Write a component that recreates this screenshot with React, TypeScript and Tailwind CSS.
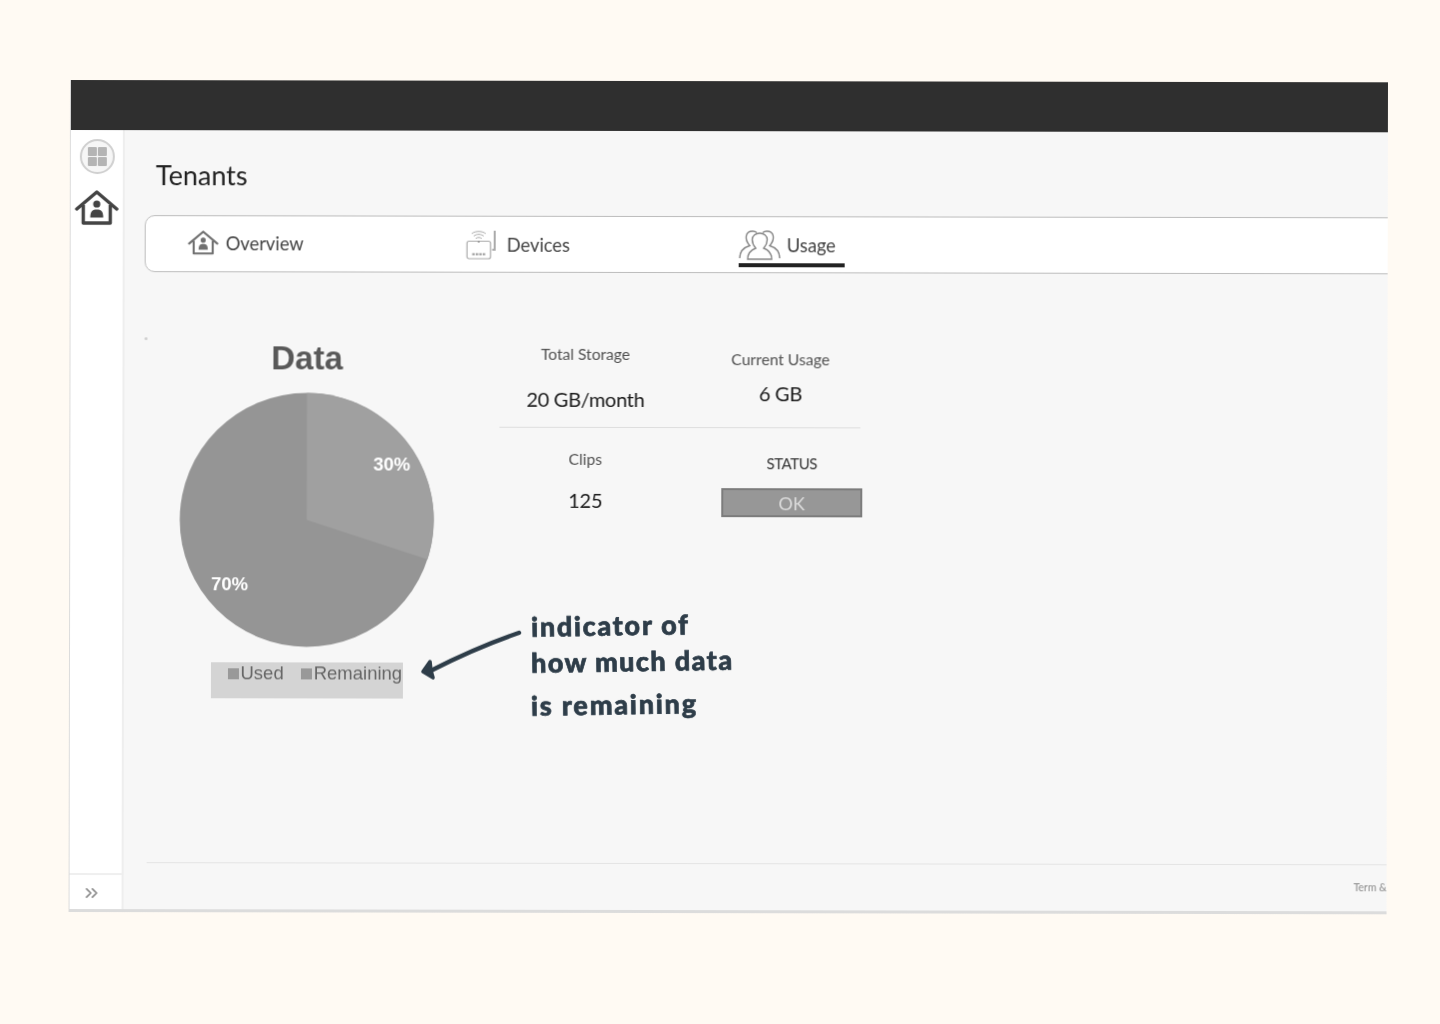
import { ChevronsRight } from "lucide-react";
import type { ReactNode } from "react";

function HouseIcon({ className, stroke, width }: { className?: string; stroke: string; width: number }) {
  return (
    <svg viewBox="0 0 44 36" className={className} fill="none">
      <path d="M2 20 L22 3 L42 20" stroke={stroke} strokeWidth={width} strokeLinecap="round" strokeLinejoin="round" />
      <path d="M8.5 16 V34 H35.5 V16" stroke={stroke} strokeWidth={width} strokeLinejoin="round" />
      <circle cx="22" cy="15" r="3.6" fill={stroke} />
      <path d="M15.5 28.5 C15.5 22 18 20.5 22 20.5 C26 20.5 28.5 22 28.5 28.5 Z" fill={stroke} />
    </svg>
  );
}

function GridIcon() {
  return (
    <div className="flex h-[35px] w-[35px] items-center justify-center rounded-full border-2 border-[#cfcfcf] bg-[#f6f6f6]">
      <div className="grid grid-cols-2 gap-[1.5px]">
        <div className="h-[9px] w-[9px] rounded-[1px] bg-[#b4b4b4]" />
        <div className="h-[9px] w-[9px] rounded-[1px] bg-[#b4b4b4]" />
        <div className="h-[9px] w-[9px] rounded-[1px] bg-[#b4b4b4]" />
        <div className="h-[9px] w-[9px] rounded-[1px] bg-[#b4b4b4]" />
      </div>
    </div>
  );
}

function RouterIcon() {
  return (
    <svg viewBox="0 0 30 30" className="h-[30px] w-[31px]" fill="none" stroke="#aaa">
      <rect x="0.8" y="11.5" width="23.5" height="17.5" rx="2" strokeWidth="1.2" />
      <path d="M26 20 H28.5 V1" strokeWidth="2" />
      <path d="M7.5 6.5 C10 4 15 4 17.5 6.5 M9.5 8.8 C11 7.4 14 7.4 15.5 8.8 M5.5 4 C9 1 16 1 19.5 4" strokeWidth="1" />
      <circle cx="12.5" cy="12" r="0.9" fill="#888" stroke="none" />
      <path d="M6 24.5 H19" stroke="#999" strokeWidth="2" strokeDasharray="2.5 1" />
    </svg>
  );
}

function PeopleIcon() {
  return (
    <svg viewBox="0 0 42 30" className="h-[30px] w-[42px]" fill="none" stroke="#858585" strokeWidth="1.4">
      <path d="M1 28 C1 20 6 17 11 15.5 C8 12 7 9 7.5 6 C8 2.5 11 1 14 1 C15.5 1 17 1.5 18 2.5" />
      <path d="M41 28 C41 20 36 17 31 15.5 C34 12 35 9 34.5 6 C34 2.5 31 1 28 1 C26.5 1 25 1.5 24 2.5" />
      <path d="M9 29 C9 22 13 19.5 17 18 C14.5 15 13.5 12.5 13.5 9.5 C13.5 5.5 17 3 21 3 C25 3 28.5 5.5 28.5 9.5 C28.5 12.5 27.5 15 25 18 C29 19.5 33 22 33 29 Z" />
    </svg>
  );
}

function Tab({ label, icon, widthClass, gapClass, labelClass, active }: { label: string; icon: ReactNode; widthClass: string; gapClass: string; labelClass?: string; active?: boolean }) {
  return (
    <div className={`flex h-full items-center ${widthClass}`}>
      <div className="relative flex items-center">
        <div className={`flex items-center ${gapClass}`}>
          {icon}
          <span className={`font-['Lato'] text-[18.3px] leading-none text-[#444] ${labelClass ?? ""}`}>{label}</span>
        </div>
        {active && <div className="absolute -bottom-[7px] left-0 h-[4px] w-[106px] bg-[#222]" />}
      </div>
    </div>
  );
}

function Stat({ label, value, widthClass, labelClass, valueClass }: { label: string; value: string; widthClass: string; labelClass: string; valueClass: string }) {
  return (
    <div className={`flex flex-col items-center font-['Lato'] ${widthClass}`}>
      <div className={`text-[15.6px] leading-5 text-[#505050] ${labelClass}`}>{label}</div>
      <div className={`text-[20px] leading-6 tracking-[-0.3px] text-[#1a1a1a] ${valueClass}`}>{value}</div>
    </div>
  );
}

export default function App() {
  return (
    <div className="relative h-[1024px] w-[1440px] overflow-hidden bg-[#fffaf3] pl-[70px] pt-[80px]">
      <div className="flex h-[832px] w-[1318px] origin-top-left rotate-[0.1deg] flex-col overflow-hidden border-b-[3px] border-l border-[#dcdcdc] bg-[#f7f7f7] blur-[0.35px]">
        <div className="h-[50px] shrink-0 bg-[#2f2f2f]" />
        <div className="flex min-h-0 flex-1">
          <aside className="flex w-[54px] shrink-0 flex-col justify-between border-r-2 border-[#eeeeee] bg-white">
            <div className="flex flex-col items-center">
              <div className="ml-[1px] mt-[9px]"><GridIcon /></div>
              <HouseIcon className="mt-[15px] h-[36px] w-[44px]" stroke="#444" width={3.4} />
            </div>
            <div className="flex h-[36px] items-center border-t-2 border-[#efefef] pl-[12px] pt-[2px]">
              <ChevronsRight className="h-[20px] w-[20px] text-[#8a8a8a]" strokeWidth={2} />
            </div>
          </aside>
          <main className="relative flex min-w-0 flex-1 flex-col">
            <h1 className="ml-[31px] mt-[29px] font-['Lato'] text-[27px] font-normal leading-8 text-[#222]">Tenants</h1>
            <nav className="ml-[20px] mt-[24px] flex h-[57px] w-[1300px] shrink-0 items-center rounded-l-[10px] border border-[#bdbdbd] bg-white pl-[42px]">
              <Tab label="Overview" widthClass="w-[278px]" gapClass="gap-[7px]" icon={<HouseIcon className="mb-[4px] h-[26px] w-[31px]" stroke="#707070" width={3} />} />
              <Tab label="Devices" widthClass="w-[273px]" gapClass="gap-[10px]" labelClass="mt-[1px]" icon={<RouterIcon />} />
              <Tab label="Usage" widthClass="w-[200px]" gapClass="gap-[6px]" labelClass="mt-[2px]" active icon={<PeopleIcon />} />
            </nav>
            <div className="ml-[20px] mt-[65px] h-[3px] w-[3px] rounded-full bg-[#cfcfcf]" />
            <section className="mt-[-3px] flex">
              <div className="ml-[55px] flex w-[255px] flex-col items-center">
                <div className="mt-[3px] font-['Liberation_Sans'] text-[33px] font-bold leading-9 text-[#595959]">Data</div>
                <div className="relative mt-[16px] h-[255px] w-[255px]">
                  <svg viewBox="0 0 256 256" className="h-full w-full">
                    <circle cx="128" cy="128" r="127.5" fill="#959595" />
                    <path d="M128 128 V0.5 A127.5 127.5 0 0 1 249.3 167.4 Z" fill="#a0a0a0" />
                  </svg>
                  <span className="absolute left-[194px] top-[62px] font-['Liberation_Sans'] text-[18.5px] font-bold leading-5 text-white">30%</span>
                  <span className="absolute left-[32px] top-[182px] font-['Liberation_Sans'] text-[18.5px] font-bold leading-5 text-white">70%</span>
                </div>
                <div className="mt-[15px] flex h-[36px] w-[192px] items-start gap-[17px] bg-[#d4d4d4] pl-[17px] font-['Liberation_Sans'] text-[18.5px] leading-[22px] text-[#666]">
                  <div className="flex items-center gap-[2px]"><div className="h-[11px] w-[11px] bg-[#999]" />Used</div>
                  <div className="flex items-center gap-[2px]"><div className="h-[11px] w-[11px] bg-[#999]" />Remaining</div>
                </div>
              </div>
              <div className="ml-[65px] w-[400px] pt-[6px]">
                <div className="flex h-[78px]">
                  <Stat label="Total Storage" value="20 GB/month" widthClass="w-[172px]" labelClass="" valueClass="mt-[23px]" />
                  <Stat label="Current Usage" value="6 GB" widthClass="w-[218px]" labelClass="mt-[5px]" valueClass="mt-[12px]" />
                </div>
                <div className="mt-[5px] h-px w-[361px] bg-[#dedede]" />
                <div className="mt-[21px] flex">
                  <Stat label="Clips" value="125" widthClass="w-[172px]" labelClass="" valueClass="mt-[19px]" />
                  <div className="ml-[50px] flex w-[141px] flex-col items-center font-['Lato']">
                    <div className="mt-[4px] text-[15px] leading-5 tracking-[-0.4px] text-[#333]">STATUS</div>
                    <div className="mt-[15px] flex h-[29px] w-[141px] items-center justify-center border-2 border-[#7c7c7c] bg-[#979797] text-[18px] leading-none text-[#dcdcdc]">OK</div>
                  </div>
                </div>
              </div>
            </section>
            <footer className="ml-[23px] mt-auto flex h-[47px] shrink-0 items-center justify-end overflow-hidden border-t border-[#e4e4e4] pb-[1px] text-[10.5px] leading-none text-[#8a8a8a]">
              <span className="whitespace-nowrap font-['Lato']">Term &amp;</span>
            </footer>

            <svg viewBox="0 0 110 60" className="absolute left-[293px] top-[494px] h-[60px] w-[110px]" fill="none" stroke="#2e3d49" strokeLinecap="round" strokeLinejoin="round">
              <path d="M102 8 C82 15 55 25 14 46" strokeWidth="4.4" />
              <path d="M13 37 L6 47 L16 53 L14 46 Z" strokeWidth="3.6" fill="#2e3d49" />
            </svg>
            <div className="absolute left-[407px] top-[482px] font-['Lato'] text-[27px] font-black leading-none text-[#2e3d49] [-webkit-text-stroke:0.7px_#2e3d49]">
              <div className="w-fit origin-left -rotate-1 tracking-[1.7px]">indicator of</div>
              <div className="mt-[9px] w-fit origin-left -rotate-1 tracking-[1.4px]">how much data</div>
              <div className="mt-[16px] w-fit origin-left -rotate-1 tracking-[1.8px]">is remaining</div>
            </div>
          </main>
        </div>
      </div>
    </div>
  );
}
